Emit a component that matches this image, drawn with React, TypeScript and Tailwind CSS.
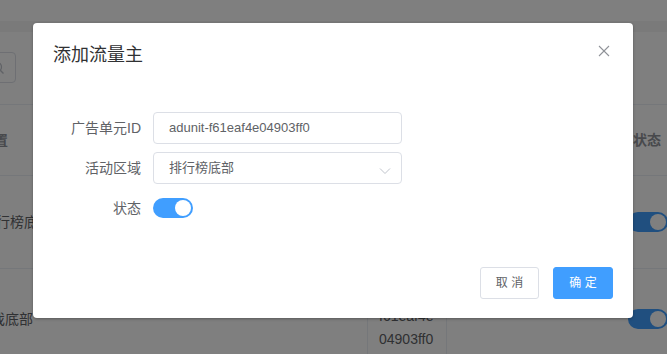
import React from "react";

const FONT = { fontFamily: '"Liberation Sans", "Noto Sans CJK SC", sans-serif' };

function BgToggle() {
  return (
    <div className="w-[40px] h-[20px] rounded-full bg-[#409eff] flex items-center justify-end pr-[2px] shrink-0">
      <div className="w-[16px] h-[16px] rounded-full bg-white" />
    </div>
  );
}

export default function App() {
  return (
    <div className="relative w-[667px] h-[354px] overflow-hidden bg-white" style={FONT}>
      {/* background page */}
      <div className="flex flex-col">
        <div className="h-[21px]" />
        <div className="h-[11px] bg-[#f4f4f4]" />
        <div className="h-[20px]" />
        <div className="h-[31px] w-[116px] ml-[-100px] border border-[#dcdfe6] rounded-[4px] flex items-center justify-end pr-[10px]">
          <svg width="14" height="14" viewBox="0 0 14 14" fill="none" stroke="#c0c4cc" strokeWidth="1.3">
            <circle cx="6" cy="6" r="4.5" />
            <line x1="9.3" y1="9.3" x2="12.5" y2="12.5" />
          </svg>
        </div>
        <div className="h-[21px]" />
        <div className="border-t border-[#ebeef5] flex flex-col text-[14px]">
          <div className="h-[71px] border-b border-[#ebeef5] flex items-center justify-between font-bold text-[#909399]">
            <span className="ml-[-20px]">配置</span>
            <span className="mr-[6px]">状态</span>
          </div>
          <div className="h-[93px] border-b border-[#ebeef5] flex items-center justify-between text-[#606266]">
            <span className="ml-[-18px]">排行榜底部</span>
            <div className="mr-[-1px]"><BgToggle /></div>
          </div>
          <div className="h-[100px] flex items-center text-[#606266]">
            <span className="ml-[-23px] w-[390px]">游戏底部</span>
            <div className="h-full w-[80px] border-l border-r border-[#ebeef5] flex flex-col justify-center pl-[11px] pb-[6px] leading-[23px]">
              <span>adunit-</span>
              <span>f61eaf4e</span>
              <span>04903ff0</span>
            </div>
            <div className="flex-1" />
            <div className="mr-[-1px]"><BgToggle /></div>
          </div>
        </div>
      </div>

      {/* overlay */}
      <div className="absolute inset-0 bg-black/50 flex items-start pt-[23px] pl-[33px]">
        <div className="w-[600px] h-[295px] bg-white rounded-[4px] shadow-[0_1px_3px_rgba(0,0,0,0.3)] flex flex-col">
          <div className="flex items-start justify-between pt-5 px-5 pb-[10px]">
            <span className="text-[18px] leading-6 text-[#303133]">添加流量主</span>
            <svg width="12" height="12" viewBox="0 0 12 12" className="mt-[2px] mr-[3px]" fill="none" stroke="#909399" strokeWidth="1.1">
              <line x1="1" y1="1" x2="11" y2="11" />
              <line x1="11" y1="1" x2="1" y2="11" />
            </svg>
          </div>
          <div className="pt-[35px] px-5 flex flex-col gap-2">
            <div className="flex items-center h-[32px]">
              <label className="w-[100px] pr-3 text-right text-[14px] text-[#606266]">广告单元ID</label>
              <div className="w-[249px] h-[32px] border border-[#dcdfe6] rounded-[4px] px-[15px] flex items-center text-[13px] text-[#606266]">
                adunit-f61eaf4e04903ff0
              </div>
            </div>
            <div className="flex items-center h-[32px]">
              <label className="w-[100px] pr-3 text-right text-[14px] text-[#606266]">活动区域</label>
              <div className="w-[249px] h-[32px] border border-[#dcdfe6] rounded-[4px] pl-[15px] pr-[10px] flex items-center justify-between text-[13px] text-[#606266]">
                <span>排行榜底部</span>
                <svg width="12" height="8" viewBox="0 0 12 8" className="mt-[5px]" fill="none" stroke="#c0c4cc" strokeWidth="1">
                  <polyline points="1,1.5 6,6.5 11,1.5" />
                </svg>
              </div>
            </div>
            <div className="flex items-center h-[32px]">
              <label className="w-[100px] pr-3 text-right text-[14px] text-[#606266]">状态</label>
              <div className="w-[40px] h-[20px] rounded-full bg-[#409eff] flex items-center justify-end pr-[2px]">
                <div className="w-[16px] h-[16px] rounded-full bg-white" />
              </div>
            </div>
          </div>
          <div className="flex-1" />
          <div className="flex justify-end gap-[14px] px-5 pb-[19px]">
            <button className="w-[59px] h-[32px] border border-[#dcdfe6] rounded-[3px] bg-white text-[12px] text-[#606266] flex items-center justify-center">
              取&nbsp;消
            </button>
            <button className="w-[60px] h-[32px] border border-[#409eff] rounded-[3px] bg-[#409eff] text-[12px] text-white flex items-center justify-center">
              确&nbsp;定
            </button>
          </div>
        </div>
      </div>
    </div>
  );
}
